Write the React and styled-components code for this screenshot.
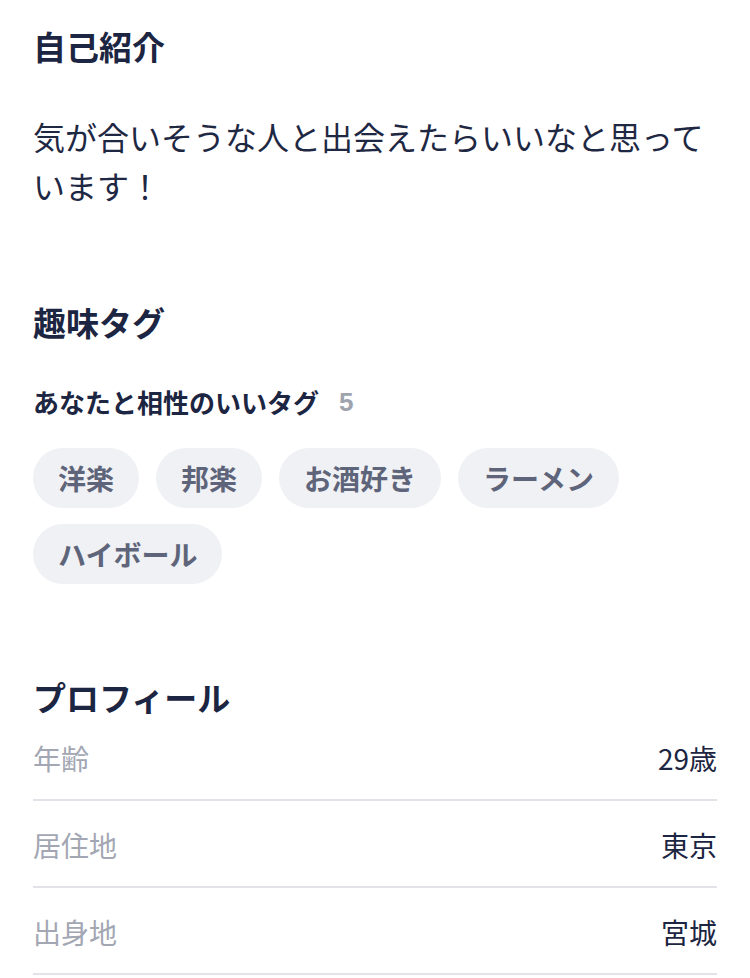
import styled, { createGlobalStyle } from "styled-components"

const GlobalStyle = createGlobalStyle`
  body {
    margin: 0;
    background: #ffffff;
    font-family: "Noto Sans CJK JP", "Noto Sans", sans-serif;
    color: #1c2541;
  }
`

const Page = styled.div`
  padding: 22px 33px 0;
`

const Section = styled.section`
  margin-top: ${(p) => p.$gap || 0}px;
`

const Title = styled.h2`
  margin: 0;
  font-size: 33px;
  font-weight: 700;
  line-height: ${(p) => (p.$tight ? 34 : 48)}px;
  color: #1c2541;
`

const Body = styled.p`
  margin: 42px 0 0;
  font-size: 32px;
  line-height: 49px;
  color: #1f2843;
`

const SubTitle = styled.div`
  margin-top: 36px;
  display: flex;
  align-items: center;
  gap: 20px;
  font-size: 26px;
  font-weight: 700;
  line-height: 40px;
`

const Count = styled.span`
  color: #9ea3ae;
  font-family: "Liberation Sans", "Noto Sans", sans-serif;
  font-size: 26px;
`

const Tags = styled.div`
  margin-top: 26px;
  display: flex;
  flex-wrap: wrap;
  gap: 16px 17px;
`

const Tag = styled.span`
  height: 60px;
  padding: 0 25px;
  display: inline-flex;
  align-items: center;
  border-radius: 30px;
  background: #f0f1f4;
  color: #5e657a;
  font-size: 28px;
  font-weight: 700;
`

const Row = styled.div`
  display: flex;
  justify-content: space-between;
  align-items: center;
  padding: 24px 0 21px;
  border-bottom: 2px solid #e1e3e8;
  font-size: 28px;
  line-height: 40px;
`

const Label = styled.span`
  color: #a3a7b3;
`

const Value = styled.span`
  color: #1c2541;
`

const tags = ["洋楽", "邦楽", "お酒好き", "ラーメン", "ハイボール"]

const profile = [
  ["年齢", "29歳"],
  ["居住地", "東京"],
  ["出身地", "宮城"],
]

const App = () => {
  return (
    <Page>
      <GlobalStyle />
      <Section>
        <Title>自己紹介</Title>
        <Body>気が合いそうな人と出会えたらいいなと思っています！</Body>
      </Section>
      <Section $gap={88}>
        <Title>趣味タグ</Title>
        <SubTitle>
          あなたと相性のいいタグ
          <Count>5</Count>
        </SubTitle>
        <Tags>
          {tags.map((t) => (
            <Tag key={t}>{t}</Tag>
          ))}
        </Tags>
      </Section>
      <Section $gap={96}>
        <Title $tight>プロフィール</Title>
        {profile.map(([k, v]) => (
          <Row key={k}>
            <Label>{k}</Label>
            <Value>{v}</Value>
          </Row>
        ))}
      </Section>
    </Page>
  )
}

export default App
